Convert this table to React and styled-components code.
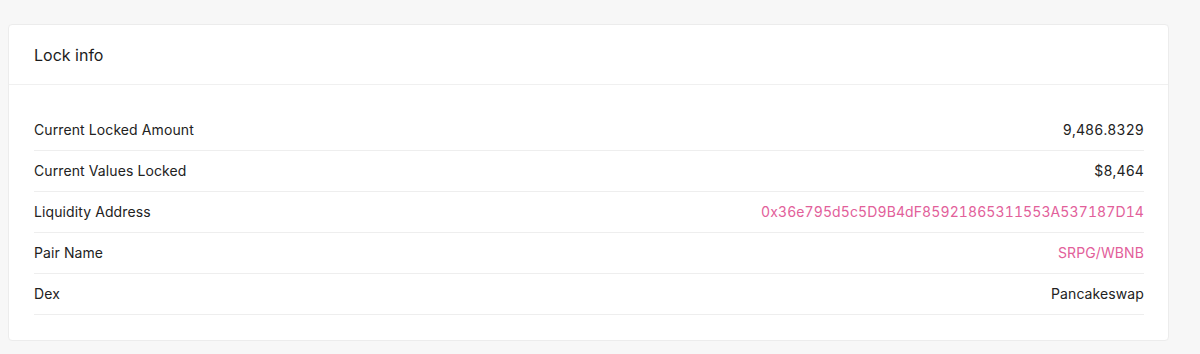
import React from "react";
import styled, { createGlobalStyle } from "styled-components";

const GlobalStyle = createGlobalStyle`
  body {
    margin: 0;
    background: #f7f7f7;
    font-family: Inter, "Noto Sans", sans-serif;
    color: #212121;
  }
`;

const rows = [
  { label: "Current Locked Amount", value: "9,486.8329" },
  { label: "Current Values Locked", value: "$8,464" },
  {
    label: "Liquidity Address",
    value: "0x36e795d5c5D9B4dF85921865311553A537187D14",
    link: true,
  },
  { label: "Pair Name", value: "SRPG/WBNB", link: true },
  { label: "Dex", value: "Pancakeswap" },
];

const LockInfo = () => (
  <>
    <GlobalStyle />
    <Page>
      <Card>
        <CardHeader>Lock info</CardHeader>
        <CardBody>
          {rows.map((row) => (
            <Row key={row.label}>
              <Label>{row.label}</Label>
              <Value $link={row.link}>{row.value}</Value>
            </Row>
          ))}
        </CardBody>
      </Card>
    </Page>
  </>
);

const Page = styled.div`
  padding: 24px 31px 12px 8px;
`;

const Card = styled.div`
  background: #fff;
  border: 1px solid #ececec;
  border-radius: 4px;
`;

const CardHeader = styled.div`
  padding: 20px 25px 19px;
  font-size: 16px;
  line-height: 20px;
  font-weight: 400;
  color: #1c1c1c;
  border-bottom: 1px solid #f0f0f0;
`;

const CardBody = styled.div`
  padding: 25px 24px 25px 25px;
`;

const Row = styled.div`
  display: flex;
  justify-content: space-between;
  align-items: center;
  padding: 10px 0;
  font-size: 14px;
  line-height: 20px;
  letter-spacing: 0.1px;
  border-bottom: 1px solid #eeeeee;
`;

const Label = styled.span`
  color: #222;
`;

const Value = styled.span`
  color: ${(p) => (p.$link ? "#e2609a" : "#222")};
  font-feature-settings: "tnum";
`;

export default LockInfo;
